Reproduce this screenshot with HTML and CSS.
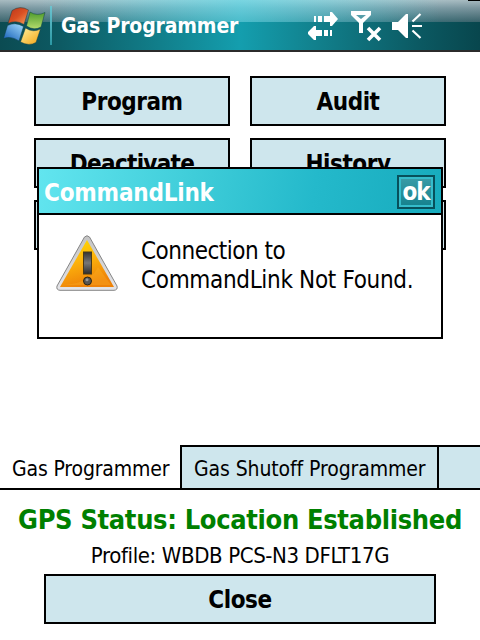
FILE: index.html
```html
<!DOCTYPE html>
<html lang="en">
<head>
<meta charset="utf-8">
<title>Gas Programmer</title>
<link rel="stylesheet" href="styles.css">
</head>
<body>
<div class="screen">
  <header class="topbar">
    <svg class="flag" width="50" height="50" viewBox="0 0 50 50">
      <defs>
        <linearGradient id="red" x1="0" y1="0" x2="1" y2="1"><stop offset="0" stop-color="#b8361c"/><stop offset=".5" stop-color="#d94f22"/><stop offset="1" stop-color="#f6a25e"/></linearGradient>
        <linearGradient id="green" x1="0" y1="0" x2="0" y2="1"><stop offset="0" stop-color="#4c9a2c"/><stop offset="1" stop-color="#b4dc6c"/></linearGradient>
        <linearGradient id="blue" x1="1" y1="0" x2=".2" y2="1"><stop offset="0" stop-color="#a4dcfc"/><stop offset="1" stop-color="#1c66bc"/></linearGradient>
        <linearGradient id="gold" x1="0" y1="0" x2="1" y2="1"><stop offset="0" stop-color="#fff09c"/><stop offset="1" stop-color="#f4a414"/></linearGradient>
      </defs>
      <g stroke="#0b3d45" stroke-opacity=".6" stroke-width=".8">
        <path fill="url(#red)" d="M12 10.500Q20 5 28.500 10L24 24.500Q16 19.500 8 23.500Z"/>
        <path fill="url(#green)" d="M30 12Q37 16.500 45 12.500L41 27Q34 31 26.500 26Z"/>
        <path fill="url(#blue)" d="M7.500 25.500Q15 21.500 23.500 26.500L19 41Q11 35.500 3.500 38.500Z"/>
        <path fill="url(#gold)" d="M25.500 28Q33 33 40.500 29L36 42.500Q29 46.500 20.500 42Z"/>
      </g>
    </svg>
    <span class="divider"></span>
    <h1 class="title"><span>Gas Programmer</span></h1>
    <svg class="status" width="120" height="34" viewBox="306 10 120 34" fill="#fff">
      <path d="M314 16h2v6h-2zM318 16h4v6h-4zM324 16h6v-4h2l6 7-6 7h-2v-4h-6z"/>
      <path d="M330 30h2v6h-2zM324 30h4v6h-4zM322 30h-6v-4h-2l-6 6v2l6 6h2v-4h6z"/>
      <path fill-rule="evenodd" d="M351 11h20v4l-8 8v10h-4V23l-8-8zM356 15l5 4 5-4z"/>
      <path fill="none" stroke="#fff" stroke-width="3.600" d="M368 28l12 12M380 28l-12 12"/>
      <path d="M392 22h6l8-8h2v24h-2l-8-8h-6z"/>
      <path fill="none" stroke="#fff" stroke-width="2.200" d="M412.500 21.500l8-7.500M412 26h10M412.500 30.500l8 7.500"/>
    </svg>
    <span class="corner"></span>
  </header>

  <main class="panel">
    <div class="actions">
      <button class="btn"><span class="t-program">Program</span></button>
      <button class="btn"><span class="t-audit">Audit</span></button>
      <button class="btn"><span class="t-deactivate">Deactivate</span></button>
      <button class="btn"><span class="t-history">History</span></button>
      <button class="btn"></button>
      <button class="btn"></button>
    </div>
  </main>

  <nav class="tabs">
    <div class="tab active"><span>Gas Programmer</span></div>
    <div class="tab"><span>Gas Shutoff Programmer</span></div>
    <div class="filler"></div>
  </nav>

  <footer class="footer">
    <div class="gps"><span>GPS Status: Location Established</span></div>
    <div class="profile"><span>Profile: WBDB PCS-N3 DFLT17G</span></div>
    <button class="btn close"><span>Close</span></button>
  </footer>

  <section class="dialog">
    <div class="dialog-head">
      <h2><span>CommandLink</span></h2>
      <button class="ok"><span>ok</span></button>
    </div>
    <div class="dialog-body">
      <svg class="warning" width="62" height="56" viewBox="0 0 62 56">
        <defs>
          <linearGradient id="amber" x1="0" y1="0" x2=".35" y2="1"><stop offset="0" stop-color="#ffe000"/><stop offset=".5" stop-color="#fdb40c"/><stop offset="1" stop-color="#ee8208"/></linearGradient>
          <linearGradient id="rim" x1="0" y1="0" x2="0" y2="1"><stop offset="0" stop-color="#c4c4c4"/><stop offset="1" stop-color="#e4e4e8"/></linearGradient>
          <linearGradient id="bar" x1="0" y1="0" x2="0" y2="1"><stop offset="0" stop-color="#333"/><stop offset=".5" stop-color="#777"/><stop offset="1" stop-color="#2c2c2c"/></linearGradient>
        </defs>
        <path d="M28.500 2Q31 -.5 33.500 2L61 51Q62 55 58 55.300H4Q0 55 1 51Z" fill="url(#rim)" stroke="#858585" stroke-width="1"/>
        <path d="M31 5L58 52H4Z" fill="url(#amber)"/>
        <path d="M7 50Q35 48 42 32L55 50Z" fill="#ffb62c" opacity=".3"/>
        <rect x="27.500" y="17" width="8" height="22" fill="url(#bar)" stroke="#4a3a16"/>
        <circle cx="31.500" cy="46" r="4" fill="#555" stroke="#30250f"/>
        <circle cx="31" cy="44.700" r="1.500" fill="#999"/>
      </svg>
      <p class="message"><span class="m1">Connection to</span><br><span class="m2">CommandLink Not Found.</span></p>
    </div>
  </section>
</div>
</body>
</html>
```
FILE: styles.css
```css
* { box-sizing: border-box; }
body { margin: 0; background: #fff; }
.screen {
  position: relative;
  width: 480px;
  height: 640px;
  display: flex;
  flex-direction: column;
  overflow: hidden;
  background: #fff;
  color: #000;
  font-family: "DejaVu Sans Condensed", "DejaVu Sans", sans-serif;
  font-stretch: condensed;
  white-space: nowrap;
}
h1, h2, p { margin: 0; }
button { font: inherit; color: inherit; margin: 0; padding: 0; }

.topbar {
  position: relative;
  flex: none;
  display: flex;
  height: 52px;
  border-bottom: 2px solid #2b2b2b;
  background:
    linear-gradient(90deg, transparent 40px, rgba(80,215,230,.55) 240px, transparent 440px) 0 0 / 100% 22px no-repeat,
    linear-gradient(rgba(235,235,240,.7) 0, rgba(225,225,232,.66) 3px, rgba(205,205,215,.58) 8px, rgba(150,150,160,.35) 22px, transparent 22px),
    linear-gradient(90deg, #0b4b52 0, #0d5a63 60px, #117f8b 160px, #149eae 240px, #117f8b 320px, #0b5962 420px, #08464d 480px);
}
.divider { width: 2px; height: 39px; margin-top: 6px; background: linear-gradient(#6cc4d0, #2b98a4); }
.title { font-size: 21px; line-height: 30px; margin: 11px 0 0 9px; width: 245px; font-weight: bold; color: #fff; letter-spacing: -.15px; }
.status { margin-top: 10px; }
.corner { position: absolute; top: 0; right: 0; width: 12px; height: 1px; background: #000; }

.panel { height: 393px; flex: none; padding: 24px 34px; }
.actions { display: grid; grid-template-columns: 196px 196px; grid-auto-rows: 50px; gap: 12px 20px; }
.btn {
  border: 2px solid #000;
  border-radius: 0;
  background: #cee6ed;
  padding-top: 2px;
  font-size: 24px;
  line-height: 44px;
  font-weight: bold;
  letter-spacing: -.45px;
}
.t-deactivate { letter-spacing: -.7px; }

.tabs { display: flex; height: 45px; flex: none; font-size: 21px; line-height: 44px; }
.tab { width: 257px; flex: none; padding-left: 12px; border: 2px solid #000; border-left: 0; background: #cee6ed; letter-spacing: -.1px; }
.tab.active { width: 182px; padding-left: 12px; border-top: 0; background: linear-gradient(#fff, #fff) padding-box; letter-spacing: -.15px; line-height: 48px; }
.filler { flex: 1; border: solid #000; border-width: 2px 0; background: #cee6ed; }

.footer { display: flex; flex-direction: column; align-items: center; }
.gps { height: 46px; padding-top: 8px; color: #008000; font-size: 27px; line-height: 44px; font-weight: bold; letter-spacing: -.34px; }
.profile { height: 38px; font-size: 22px; line-height: 40px; letter-spacing: -.38px; }
.close { width: 392px; height: 50px; }

.dialog { position: absolute; left: 37px; top: 167px; width: 406px; height: 172px; border: 2px solid #000; background: #fff; }
.dialog-head {
  display: flex;
  justify-content: space-between;
  height: 46px;
  padding: 0 6px 0 5px;
  border-bottom: 2px solid #000;
  background: linear-gradient(100deg, #62e5ef 0, #3fcdd9 38%, #24b9cb 68%, #17abbd 100%);
  color: #fff;
}
.dialog-head h2 { font-size: 24px; line-height: 48px; letter-spacing: -.2px; }
.ok {
  width: 38px;
  height: 34px;
  margin-top: 6px;
  border: 2px solid #07505b;
  background: linear-gradient(#3b9ca8, #14818d);
  box-shadow: inset 0 0 0 2px #35bccb;
  color: #fff;
  font-size: 24px;
  line-height: 28px;
  font-weight: bold;
  letter-spacing: -1px;
}
.dialog-body { display: flex; padding: 20px 0 0 17px; }
.message { margin: 2px 0 0 23px; font-size: 24px; line-height: 29px; letter-spacing: -.33px; }
.m1 { letter-spacing: -.5px; }
```
